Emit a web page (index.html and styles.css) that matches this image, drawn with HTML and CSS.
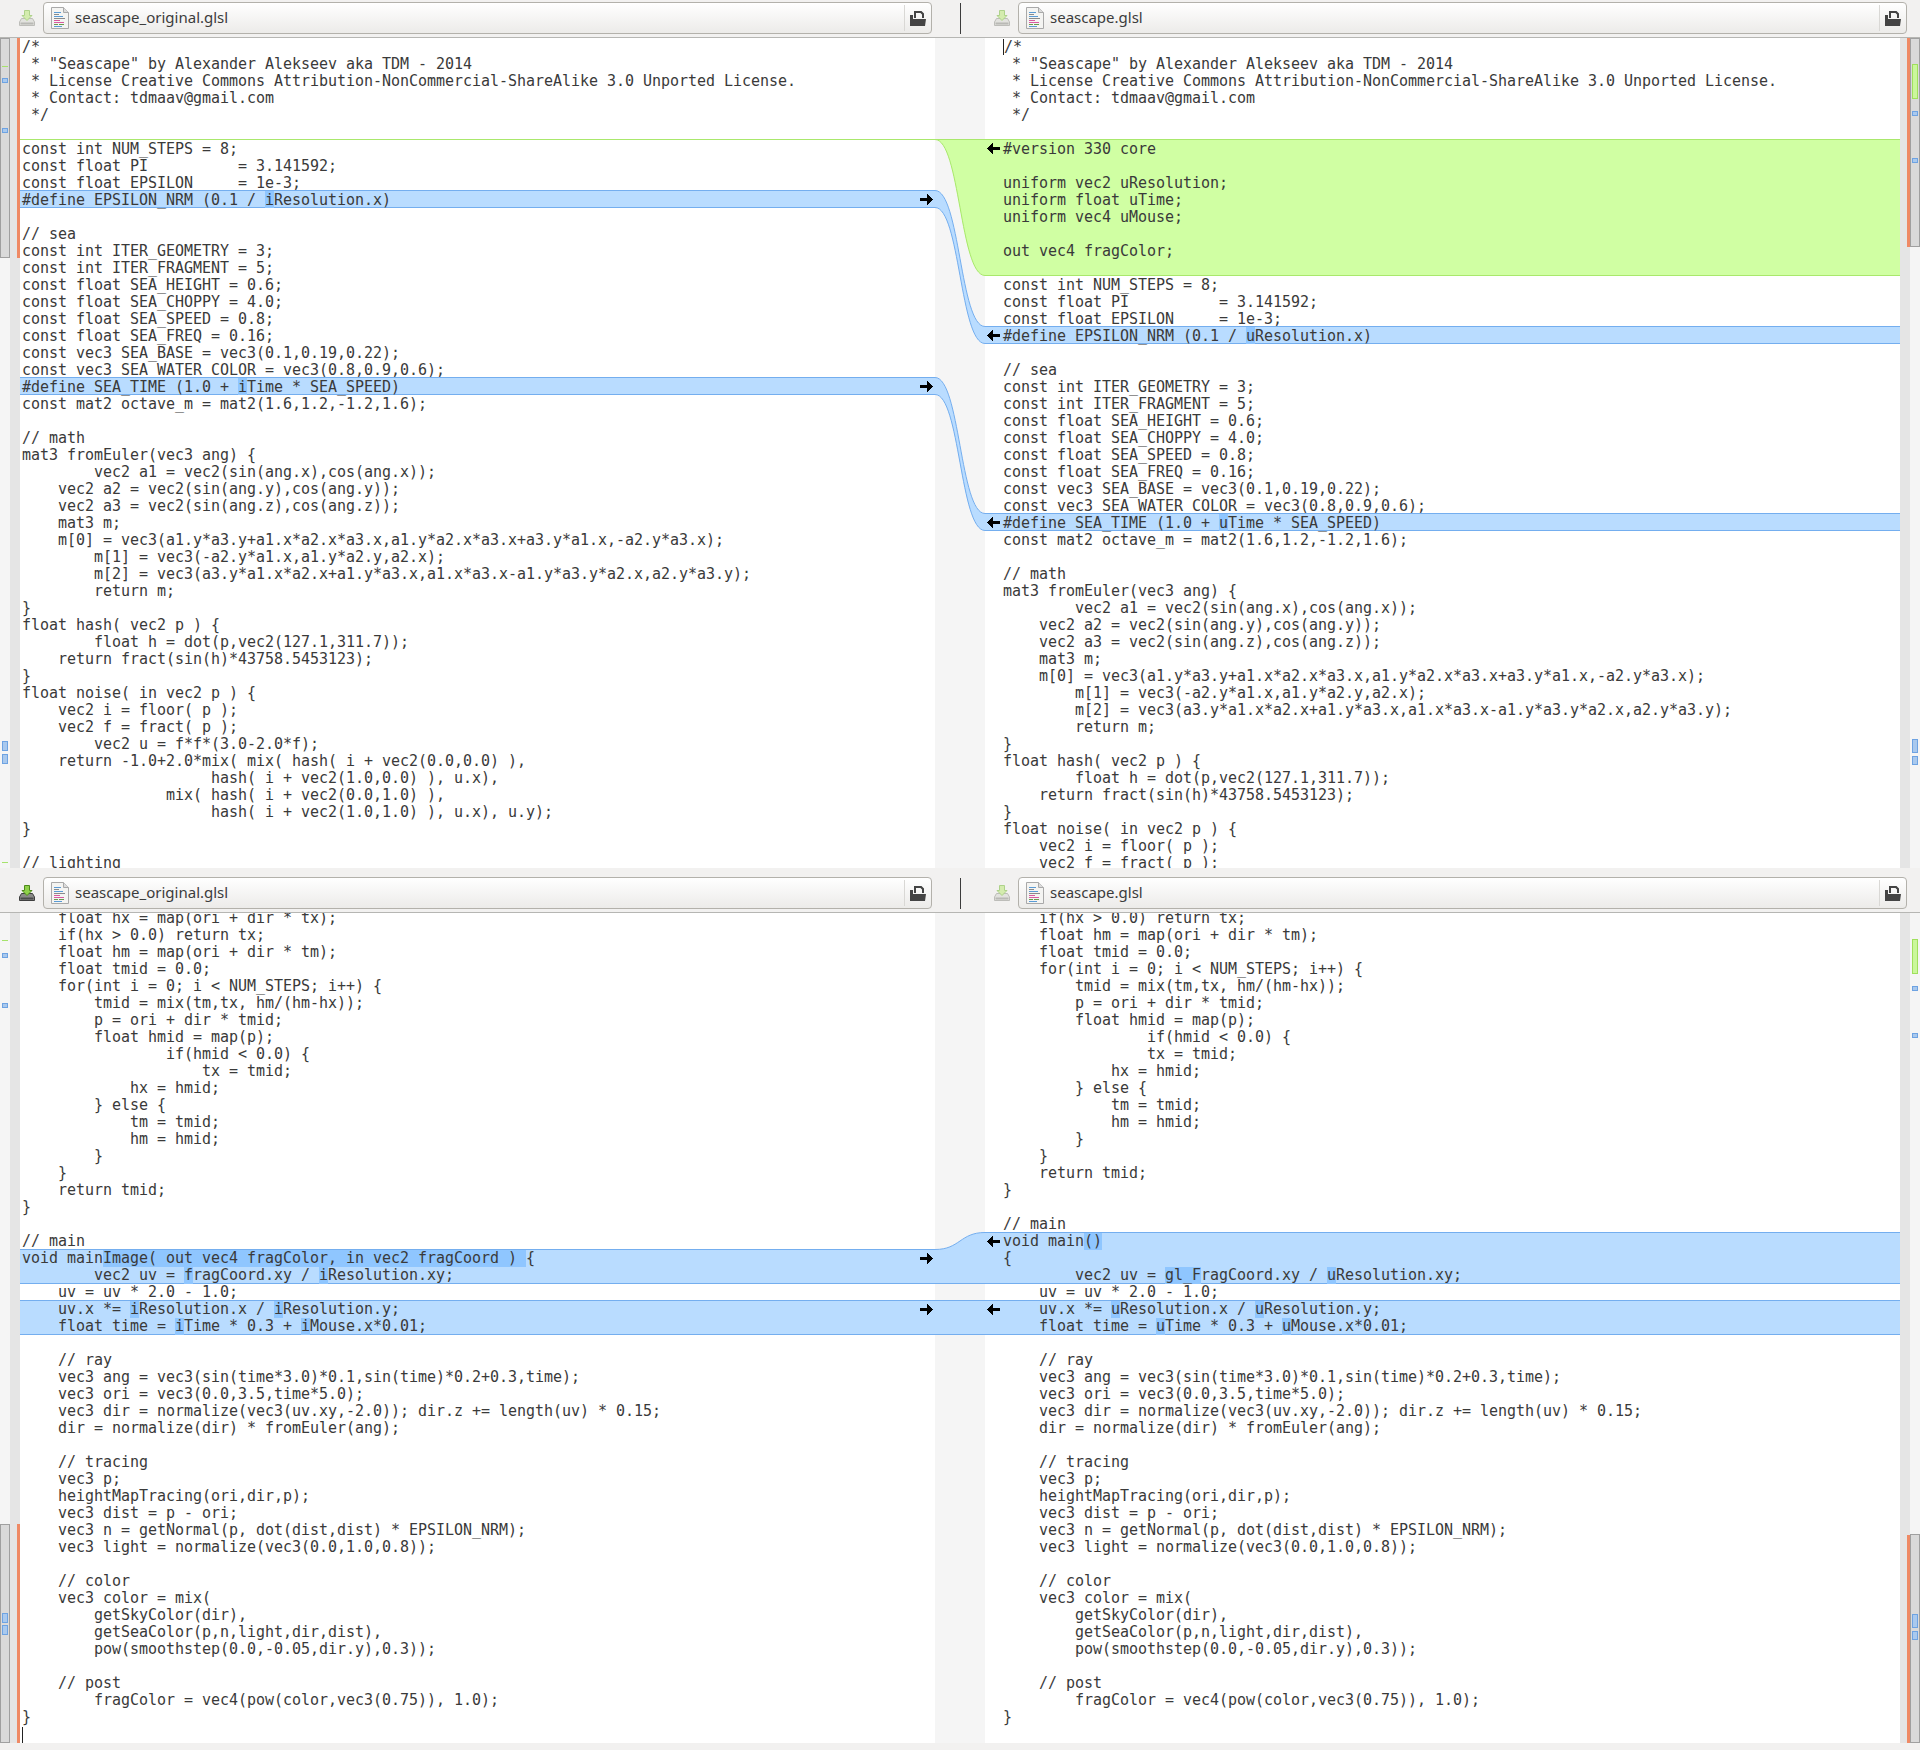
FILE: index.html
```
<!DOCTYPE html>
<html lang="en">
<head>
<meta charset="utf-8">
<title>Meld: seascape_original.glsl : seascape.glsl</title>
<link rel="stylesheet" href="styles.css">
</head>
<body>
<svg class="defs" width="0" height="0" aria-hidden="true">
  <defs>
    <symbol id="save-on" viewBox="0 0 16 16">
      <path d="M2.500 8.500 .5 12v3.500h15V12l-2-3.500z" fill="#8a8a88" stroke="#3f3f3f"/>
      <path d="M1.500 12.500h13v2h-13z" fill="#4b4b4a"/>
      <path d="M5.500 .5h5v5h2.500L8 10.500 3 5.500h2.500z" fill="#8fd04a" stroke="#4e8a1a"/>
    </symbol>
    <symbol id="save-off" viewBox="0 0 16 16">
      <path d="M2.500 8.500 .5 12v3.500h15V12l-2-3.500z" fill="#e2e2de" stroke="#bdbdb9"/>
      <path d="M1.500 12.500h13v2h-13z" fill="#b9b9b5"/>
      <path d="M5.500 .5h5v5h2.500L8 10.500 3 5.500h2.500z" fill="#d4ecae" stroke="#aed28a"/>
    </symbol>
    <symbol id="file" viewBox="0 0 18 22">
      <path d="M.5 .5h12l5 5v16H.5z" fill="#f4f4f2" stroke="#a9a9a9"/>
      <path d="M12.500 .5v5h5" fill="#dcdcdc" stroke="#a9a9a9"/>
      <path d="M3 5h7v1H3z" fill="#5a9bd5"/>
      <path d="M3 7h5v1H3z" fill="#8a8a8a"/>
      <path d="M3 9h9v1H3z" fill="#5a9bd5"/>
      <path d="M3 11h11v1H3z" fill="#8a8a8a"/>
      <path d="M3 13h6v1H3z" fill="#d85ba0"/>
      <path d="M3 15h10v1H3z" fill="#d85ba0"/>
      <path d="M3 17h4v1H3zM8 17h5v1H8z" fill="#6a9a50"/>
      <path d="M3 19h8v1H3z" fill="#5a9bd5"/>
    </symbol>
    <symbol id="open" viewBox="0 0 16 15">
      <path fill="#444" fill-rule="evenodd" d="M4 0H11.500L14 2.500V7H4ZM6 2V7H12V3.500L10.500 2ZM0 15V4H3V8H16L15 15Z"/>
    </symbol>
    <symbol id="arr-r" viewBox="0 0 13 11">
      <path d="M0 4h7V0h1v1h1v1h1v1h1v1h1v1h1v1h-1v1h-1v1h-1v1H9v1H8v1H7V7H0z" fill="#000"/>
    </symbol>
    <symbol id="arr-l" viewBox="0 0 13 11">
      <path d="M13 4H6V0H5v1H4v1H3v1H2v1H1v1H0v1h1v1h1v1h1v1h1v1h1v1h1V7h7z" fill="#000"/>
    </symbol>
  </defs>
</svg>

<main class="window">

<section class="pane">
  <header class="bar">
    <div class="side side-l">
      <svg class="save"><use href="#save-off"/></svg>
      <div class="entry"><svg class="fileicon"><use href="#file"/></svg><span class="name">seascape_original.glsl</span><span class="openbtn"><svg class="openicon"><use href="#open"/></svg></span></div>
    </div>
    <div class="sep"></div>
    <div class="side side-r">
      <svg class="save"><use href="#save-off"/></svg>
      <div class="entry"><svg class="fileicon"><use href="#file"/></svg><span class="name">seascape.glsl</span><span class="openbtn"><svg class="openicon"><use href="#open"/></svg></span></div>
    </div>
  </header>
  <div class="body">
    <svg class="map" viewBox="0 0 10 830">
      <rect class="thumb" x=".5" y=".5" width="9" height="219"/>
      <rect class="mk-g" x="2" y="28" width="6" height="1"/>
      <rect class="mk-b" x="2.500" y="40.500" width="5" height="4"/>
      <rect class="mk-b" x="2.500" y="90.500" width="5" height="4"/>
      <rect class="mk-b" x="2.500" y="703.500" width="5" height="9"/>
      <rect class="mk-b" x="2.500" y="716.500" width="5" height="9"/>
      <rect class="mk-g" x="2" y="824" width="6" height="1"/>
    </svg>
    <div class="gutter gutter-l"><div class="orange orange-a"></div></div>
    <div class="editor"><div class="code">
<div class="ln">/*</div>
<div class="ln"> * "Seascape" by Alexander Alekseev aka TDM - 2014</div>
<div class="ln"> * License Creative Commons Attribution-NonCommercial-ShareAlike 3.0 Unported License.</div>
<div class="ln"> * Contact: tdmaav@gmail.com</div>
<div class="ln"> */</div>
<div class="ln ins-line"></div>
<div class="ln">const int NUM_STEPS = 8;</div>
<div class="ln">const float PI          = 3.141592;</div>
<div class="ln">const float EPSILON     = 1e-3;</div>
<div class="ln chg top bot">#define EPSILON_NRM (0.1 / <span class="i">i</span>Resolution.x)<svg class="arrow arrow-r"><use href="#arr-r"/></svg></div>
<div class="ln"></div>
<div class="ln">// sea</div>
<div class="ln">const int ITER_GEOMETRY = 3;</div>
<div class="ln">const int ITER_FRAGMENT = 5;</div>
<div class="ln">const float SEA_HEIGHT = 0.6;</div>
<div class="ln">const float SEA_CHOPPY = 4.0;</div>
<div class="ln">const float SEA_SPEED = 0.8;</div>
<div class="ln">const float SEA_FREQ = 0.16;</div>
<div class="ln">const vec3 SEA_BASE = vec3(0.1,0.19,0.22);</div>
<div class="ln">const vec3 SEA_WATER_COLOR = vec3(0.8,0.9,0.6);</div>
<div class="ln chg top bot">#define SEA_TIME (1.0 + <span class="i">i</span>Time * SEA_SPEED)<svg class="arrow arrow-r"><use href="#arr-r"/></svg></div>
<div class="ln">const mat2 octave_m = mat2(1.6,1.2,-1.2,1.6);</div>
<div class="ln"></div>
<div class="ln">// math</div>
<div class="ln">mat3 fromEuler(vec3 ang) {</div>
<div class="ln">        vec2 a1 = vec2(sin(ang.x),cos(ang.x));</div>
<div class="ln">    vec2 a2 = vec2(sin(ang.y),cos(ang.y));</div>
<div class="ln">    vec2 a3 = vec2(sin(ang.z),cos(ang.z));</div>
<div class="ln">    mat3 m;</div>
<div class="ln">    m[0] = vec3(a1.y*a3.y+a1.x*a2.x*a3.x,a1.y*a2.x*a3.x+a3.y*a1.x,-a2.y*a3.x);</div>
<div class="ln">        m[1] = vec3(-a2.y*a1.x,a1.y*a2.y,a2.x);</div>
<div class="ln">        m[2] = vec3(a3.y*a1.x*a2.x+a1.y*a3.x,a1.x*a3.x-a1.y*a3.y*a2.x,a2.y*a3.y);</div>
<div class="ln">        return m;</div>
<div class="ln">}</div>
<div class="ln">float hash( vec2 p ) {</div>
<div class="ln">        float h = dot(p,vec2(127.1,311.7));</div>
<div class="ln">    return fract(sin(h)*43758.5453123);</div>
<div class="ln">}</div>
<div class="ln">float noise( in vec2 p ) {</div>
<div class="ln">    vec2 i = floor( p );</div>
<div class="ln">    vec2 f = fract( p );</div>
<div class="ln">        vec2 u = f*f*(3.0-2.0*f);</div>
<div class="ln">    return -1.0+2.0*mix( mix( hash( i + vec2(0.0,0.0) ),</div>
<div class="ln">                     hash( i + vec2(1.0,0.0) ), u.x),</div>
<div class="ln">                mix( hash( i + vec2(0.0,1.0) ),</div>
<div class="ln">                     hash( i + vec2(1.0,1.0) ), u.x), u.y);</div>
<div class="ln">}</div>
<div class="ln"></div>
<div class="ln">// lighting</div>
    </div></div>
    <svg class="link" viewBox="0 0 50 830">
      <path class="f-ins" d="M0 101.500H50V237.500C25 237.500 25 101.500 0 101.500Z"/>
      <path class="s-ins" d="M0 101.500H50M50 237.500C25 237.500 25 101.500 0 101.500"/>
      <path class="f-chg" d="M0 152.500C25 152.500 25 288.500 50 288.500V305.500C25 305.500 25 169.500 0 169.500Z"/>
      <path class="s-chg" d="M0 152.500C25 152.500 25 288.500 50 288.500M50 305.500C25 305.500 25 169.500 0 169.500"/>
      <path class="f-chg" d="M0 339.500C25 339.500 25 475.500 50 475.500V492.500C25 492.500 25 356.500 0 356.500Z"/>
      <path class="s-chg" d="M0 339.500C25 339.500 25 475.500 50 475.500M50 492.500C25 492.500 25 356.500 0 356.500"/>
    </svg>
    <div class="editor editor-right"><div class="code">
<div class="ln"><span class="caret"></span>/*</div>
<div class="ln"> * "Seascape" by Alexander Alekseev aka TDM - 2014</div>
<div class="ln"> * License Creative Commons Attribution-NonCommercial-ShareAlike 3.0 Unported License.</div>
<div class="ln"> * Contact: tdmaav@gmail.com</div>
<div class="ln"> */</div>
<div class="ln"></div>
<div class="ln ins top">#version 330 core<svg class="arrow arrow-l"><use href="#arr-l"/></svg></div>
<div class="ln ins"></div>
<div class="ln ins">uniform vec2 uResolution;</div>
<div class="ln ins">uniform float uTime;</div>
<div class="ln ins">uniform vec4 uMouse;</div>
<div class="ln ins"></div>
<div class="ln ins">out vec4 fragColor;</div>
<div class="ln ins bot"></div>
<div class="ln">const int NUM_STEPS = 8;</div>
<div class="ln">const float PI          = 3.141592;</div>
<div class="ln">const float EPSILON     = 1e-3;</div>
<div class="ln chg top bot">#define EPSILON_NRM (0.1 / <span class="i">u</span>Resolution.x)<svg class="arrow arrow-l"><use href="#arr-l"/></svg></div>
<div class="ln"></div>
<div class="ln">// sea</div>
<div class="ln">const int ITER_GEOMETRY = 3;</div>
<div class="ln">const int ITER_FRAGMENT = 5;</div>
<div class="ln">const float SEA_HEIGHT = 0.6;</div>
<div class="ln">const float SEA_CHOPPY = 4.0;</div>
<div class="ln">const float SEA_SPEED = 0.8;</div>
<div class="ln">const float SEA_FREQ = 0.16;</div>
<div class="ln">const vec3 SEA_BASE = vec3(0.1,0.19,0.22);</div>
<div class="ln">const vec3 SEA_WATER_COLOR = vec3(0.8,0.9,0.6);</div>
<div class="ln chg top bot">#define SEA_TIME (1.0 + <span class="i">u</span>Time * SEA_SPEED)<svg class="arrow arrow-l"><use href="#arr-l"/></svg></div>
<div class="ln">const mat2 octave_m = mat2(1.6,1.2,-1.2,1.6);</div>
<div class="ln"></div>
<div class="ln">// math</div>
<div class="ln">mat3 fromEuler(vec3 ang) {</div>
<div class="ln">        vec2 a1 = vec2(sin(ang.x),cos(ang.x));</div>
<div class="ln">    vec2 a2 = vec2(sin(ang.y),cos(ang.y));</div>
<div class="ln">    vec2 a3 = vec2(sin(ang.z),cos(ang.z));</div>
<div class="ln">    mat3 m;</div>
<div class="ln">    m[0] = vec3(a1.y*a3.y+a1.x*a2.x*a3.x,a1.y*a2.x*a3.x+a3.y*a1.x,-a2.y*a3.x);</div>
<div class="ln">        m[1] = vec3(-a2.y*a1.x,a1.y*a2.y,a2.x);</div>
<div class="ln">        m[2] = vec3(a3.y*a1.x*a2.x+a1.y*a3.x,a1.x*a3.x-a1.y*a3.y*a2.x,a2.y*a3.y);</div>
<div class="ln">        return m;</div>
<div class="ln">}</div>
<div class="ln">float hash( vec2 p ) {</div>
<div class="ln">        float h = dot(p,vec2(127.1,311.7));</div>
<div class="ln">    return fract(sin(h)*43758.5453123);</div>
<div class="ln">}</div>
<div class="ln">float noise( in vec2 p ) {</div>
<div class="ln">    vec2 i = floor( p );</div>
<div class="ln">    vec2 f = fract( p );</div>
    </div></div>
    <div class="gutter gutter-r"><div class="orange orange-b"></div></div>
    <svg class="map map-r" viewBox="0 0 10 830">
      <rect class="thumb" x=".5" y=".5" width="9" height="208"/>
      <rect class="mk-gb" x="2.500" y="26.500" width="5" height="34"/>
      <rect class="mk-b" x="2.500" y="73.500" width="5" height="4"/>
      <rect class="mk-b" x="2.500" y="120.500" width="5" height="4"/>
      <rect class="mk-b" x="2.500" y="701.500" width="5" height="13"/>
      <rect class="mk-b" x="2.500" y="718.500" width="5" height="8"/>
    </svg>
  </div>
</section>

<section class="pane">
  <header class="bar">
    <div class="side side-l">
      <svg class="save"><use href="#save-on"/></svg>
      <div class="entry"><svg class="fileicon"><use href="#file"/></svg><span class="name">seascape_original.glsl</span><span class="openbtn"><svg class="openicon"><use href="#open"/></svg></span></div>
    </div>
    <div class="sep"></div>
    <div class="side side-r">
      <svg class="save"><use href="#save-off"/></svg>
      <div class="entry"><svg class="fileicon"><use href="#file"/></svg><span class="name">seascape.glsl</span><span class="openbtn"><svg class="openicon"><use href="#open"/></svg></span></div>
    </div>
  </header>
  <div class="body">
    <svg class="map" viewBox="0 0 10 830">
      <rect class="thumb" x=".5" y="611.500" width="9" height="218"/>
      <rect class="mk-g" x="2" y="27" width="6" height="1"/>
      <rect class="mk-b" x="2.500" y="40.500" width="5" height="4"/>
      <rect class="mk-b" x="2.500" y="90.500" width="5" height="4"/>
      <rect class="mk-b" x="2.500" y="700.500" width="5" height="9"/>
      <rect class="mk-b" x="2.500" y="712.500" width="5" height="9"/>
    </svg>
    <div class="gutter gutter-l gutter-end"><div class="orange orange-c"></div></div>
    <div class="editor"><div class="code scrolled">
<div class="ln">    float hx = map(ori + dir * tx);</div>
<div class="ln">    if(hx &gt; 0.0) return tx;</div>
<div class="ln">    float hm = map(ori + dir * tm);</div>
<div class="ln">    float tmid = 0.0;</div>
<div class="ln">    for(int i = 0; i &lt; NUM_STEPS; i++) {</div>
<div class="ln">        tmid = mix(tm,tx, hm/(hm-hx));</div>
<div class="ln">        p = ori + dir * tmid;</div>
<div class="ln">        float hmid = map(p);</div>
<div class="ln">                if(hmid &lt; 0.0) {</div>
<div class="ln">                    tx = tmid;</div>
<div class="ln">            hx = hmid;</div>
<div class="ln">        } else {</div>
<div class="ln">            tm = tmid;</div>
<div class="ln">            hm = hmid;</div>
<div class="ln">        }</div>
<div class="ln">    }</div>
<div class="ln">    return tmid;</div>
<div class="ln">}</div>
<div class="ln"></div>
<div class="ln">// main</div>
<div class="ln chg top">void main<span class="i">Image( out vec4 fragColor, in vec2 fragCoord ) </span>{<svg class="arrow arrow-r"><use href="#arr-r"/></svg></div>
<div class="ln chg bot">        vec2 uv = <span class="i">f</span>ragCoord.xy / <span class="i">i</span>Resolution.xy;</div>
<div class="ln">    uv = uv * 2.0 - 1.0;</div>
<div class="ln chg top">    uv.x *= <span class="i">i</span>Resolution.x / <span class="i">i</span>Resolution.y;<svg class="arrow arrow-r"><use href="#arr-r"/></svg></div>
<div class="ln chg bot">    float time = <span class="i">i</span>Time * 0.3 + <span class="i">i</span>Mouse.x*0.01;</div>
<div class="ln"></div>
<div class="ln">    // ray</div>
<div class="ln">    vec3 ang = vec3(sin(time*3.0)*0.1,sin(time)*0.2+0.3,time);</div>
<div class="ln">    vec3 ori = vec3(0.0,3.5,time*5.0);</div>
<div class="ln">    vec3 dir = normalize(vec3(uv.xy,-2.0)); dir.z += length(uv) * 0.15;</div>
<div class="ln">    dir = normalize(dir) * fromEuler(ang);</div>
<div class="ln"></div>
<div class="ln">    // tracing</div>
<div class="ln">    vec3 p;</div>
<div class="ln">    heightMapTracing(ori,dir,p);</div>
<div class="ln">    vec3 dist = p - ori;</div>
<div class="ln">    vec3 n = getNormal(p, dot(dist,dist) * EPSILON_NRM);</div>
<div class="ln">    vec3 light = normalize(vec3(0.0,1.0,0.8));</div>
<div class="ln"></div>
<div class="ln">    // color</div>
<div class="ln">    vec3 color = mix(</div>
<div class="ln">        getSkyColor(dir),</div>
<div class="ln">        getSeaColor(p,n,light,dir,dist),</div>
<div class="ln">        pow(smoothstep(0.0,-0.05,dir.y),0.3));</div>
<div class="ln"></div>
<div class="ln">    // post</div>
<div class="ln">        fragColor = vec4(pow(color,vec3(0.75)), 1.0);</div>
<div class="ln">}</div>
<div class="ln"><span class="caret"></span></div>
    </div></div>
    <svg class="link" viewBox="0 0 50 830">
      <path class="f-chg" d="M0 336.500C25 336.500 25 319.500 50 319.500V370.500H0Z"/>
      <path class="s-chg" d="M0 336.500C25 336.500 25 319.500 50 319.500M0 370.500H50"/>
      <path class="f-chg" d="M0 387.500H50V421.500H0Z"/>
      <path class="s-chg" d="M0 387.500H50M0 421.500H50"/>
    </svg>
    <div class="editor editor-right"><div class="code scrolled">
<div class="ln">    if(hx &gt; 0.0) return tx;</div>
<div class="ln">    float hm = map(ori + dir * tm);</div>
<div class="ln">    float tmid = 0.0;</div>
<div class="ln">    for(int i = 0; i &lt; NUM_STEPS; i++) {</div>
<div class="ln">        tmid = mix(tm,tx, hm/(hm-hx));</div>
<div class="ln">        p = ori + dir * tmid;</div>
<div class="ln">        float hmid = map(p);</div>
<div class="ln">                if(hmid &lt; 0.0) {</div>
<div class="ln">                tx = tmid;</div>
<div class="ln">            hx = hmid;</div>
<div class="ln">        } else {</div>
<div class="ln">            tm = tmid;</div>
<div class="ln">            hm = hmid;</div>
<div class="ln">        }</div>
<div class="ln">    }</div>
<div class="ln">    return tmid;</div>
<div class="ln">}</div>
<div class="ln"></div>
<div class="ln">// main</div>
<div class="ln chg top">void main<span class="i">()</span><svg class="arrow arrow-l"><use href="#arr-l"/></svg></div>
<div class="ln chg">{</div>
<div class="ln chg bot">        vec2 uv = <span class="i">gl_F</span>ragCoord.xy / <span class="i">u</span>Resolution.xy;</div>
<div class="ln">    uv = uv * 2.0 - 1.0;</div>
<div class="ln chg top">    uv.x *= <span class="i">u</span>Resolution.x / <span class="i">u</span>Resolution.y;<svg class="arrow arrow-l"><use href="#arr-l"/></svg></div>
<div class="ln chg bot">    float time = <span class="i">u</span>Time * 0.3 + <span class="i">u</span>Mouse.x*0.01;</div>
<div class="ln"></div>
<div class="ln">    // ray</div>
<div class="ln">    vec3 ang = vec3(sin(time*3.0)*0.1,sin(time)*0.2+0.3,time);</div>
<div class="ln">    vec3 ori = vec3(0.0,3.5,time*5.0);</div>
<div class="ln">    vec3 dir = normalize(vec3(uv.xy,-2.0)); dir.z += length(uv) * 0.15;</div>
<div class="ln">    dir = normalize(dir) * fromEuler(ang);</div>
<div class="ln"></div>
<div class="ln">    // tracing</div>
<div class="ln">    vec3 p;</div>
<div class="ln">    heightMapTracing(ori,dir,p);</div>
<div class="ln">    vec3 dist = p - ori;</div>
<div class="ln">    vec3 n = getNormal(p, dot(dist,dist) * EPSILON_NRM);</div>
<div class="ln">    vec3 light = normalize(vec3(0.0,1.0,0.8));</div>
<div class="ln"></div>
<div class="ln">    // color</div>
<div class="ln">    vec3 color = mix(</div>
<div class="ln">        getSkyColor(dir),</div>
<div class="ln">        getSeaColor(p,n,light,dir,dist),</div>
<div class="ln">        pow(smoothstep(0.0,-0.05,dir.y),0.3));</div>
<div class="ln"></div>
<div class="ln">    // post</div>
<div class="ln">        fragColor = vec4(pow(color,vec3(0.75)), 1.0);</div>
<div class="ln">}</div>
    </div></div>
    <div class="gutter gutter-r gutter-end"><div class="orange orange-d"></div></div>
    <svg class="map map-r" viewBox="0 0 10 830">
      <rect class="thumb" x=".5" y="621.500" width="9" height="208"/>
      <rect class="mk-gb" x="2.500" y="26.500" width="5" height="34"/>
      <rect class="mk-b" x="2.500" y="73.500" width="5" height="4"/>
      <rect class="mk-b" x="2.500" y="120.500" width="5" height="4"/>
      <rect class="mk-b" x="2.500" y="701.500" width="5" height="13"/>
      <rect class="mk-b" x="2.500" y="718.500" width="5" height="8"/>
    </svg>
  </div>
</section>

</main>
</body>
</html>
```
FILE: styles.css
```
* { box-sizing: border-box; }
html, body { margin: 0; padding: 0; }
body { width: 1920px; height: 1750px; background: #f2f1f0; overflow: hidden; }
.defs { position: absolute; }
.window { display: flex; flex-direction: column; gap: 7px; }
.pane { display: flex; flex-direction: column; height: 868px; }

.bar {
  display: flex;
  height: 38px;
  background: #f2f1f0;
  border-bottom: 1px solid #b6b6b3;
}
.side { display: flex; align-items: flex-start; gap: 8px; padding-top: 2px; }
.side-l { width: 960px; padding-left: 19px; }
.side-r { width: 959px; padding-left: 33px; }
.sep { width: 1px; height: 31px; margin-top: 3px; background: #3c3c3c; }
.save { width: 16px; height: 16px; margin-top: 8px; flex: none; }
.entry {
  display: flex;
  align-items: center;
  width: 889px;
  height: 32px;
  border: 1px solid #b3b1ab;
  border-radius: 4px;
  background: linear-gradient(#ffffff, #ecebe9);
  padding-left: 7px;
}
.fileicon { width: 18px; height: 22px; flex: none; }
.name {
  margin-left: 6px;
  padding-bottom: 2px;
  font: 15px/20px "Noto Sans", sans-serif;
  color: #3c3c3c;
  flex: 1;
  white-space: nowrap;
}
.openbtn {
  display: flex;
  align-items: center;
  justify-content: center;
  width: 27px;
  height: 26px;
  border-left: 1px solid #d9d8d5;
  flex: none;
  padding-right: 1px;
}
.openicon { width: 16px; height: 15px; }

.body { display: flex; height: 830px; }
.map { width: 10px; height: 830px; flex: none; background: #f5f5f5; }
.thumb { fill: #dadada; stroke: #a0a0a0; }
.mk-g { fill: #a6e36c; }
.mk-b { fill: #a9c9ee; stroke: #6ea3e2; }
.mk-gb { fill: #caf79c; stroke: #9fe05c; }

.gutter { width: 10px; flex: none; background: #e5e5e5; display: flex; flex-direction: column; }
.gutter-end { justify-content: flex-end; }
.gutter-l { align-items: flex-end; }
.gutter-r { align-items: flex-end; }
.orange { width: 3px; background: #ef8a65; }
.orange-a { height: 220px; }
.orange-b { height: 209px; }
.orange-c { height: 219px; }
.orange-d { height: 208px; }

.editor {
  width: 915px;
  flex: none;
  height: 830px;
  overflow: hidden;
  background: #fff;
}
.code {
  font: 15px/17px "DejaVu Sans Mono", monospace;
  letter-spacing: -0.03px;
  color: #3a3a3a;
}
.scrolled { margin-top: -3px; }
.ln {
  position: relative;
  height: 17px;
  line-height: 19px;
  white-space: pre;
  padding-left: 2px;
}
.scrolled .ln { line-height: 17px; }
.editor-right .ln { padding-left: 18px; }

.chg { background: #b9dcff; }
.ins { background: #d0ffa3; }
.chg.top { box-shadow: 0 -1px 0 #74aeef; }
.chg.bot { box-shadow: inset 0 -1px 0 #74aeef; }
.chg.top.bot { box-shadow: 0 -1px 0 #74aeef, inset 0 -1px 0 #74aeef; }
.ins.top { box-shadow: 0 -1px 0 #a9e86c; }
.ins.bot { box-shadow: inset 0 -1px 0 #a9e86c; }
.ins-line { box-shadow: inset 0 -1px 0 #a9e86c; }
.i { display: inline-block; height: 17px; vertical-align: top; background: #8fc6ff; }
.caret { display: inline-block; width: 0; height: 16px; vertical-align: top; margin-top: 1px; border-left: 1px solid #222; }

.arrow { position: absolute; top: 3px; width: 13px; height: 11px; }
.arrow-r { right: 2px; }
.arrow-l { left: 2px; }

.link { width: 50px; height: 830px; flex: none; background: #f5f5f5; }
.f-ins { fill: #d0ffa3; stroke: none; }
.s-ins { fill: none; stroke: #a9e86c; stroke-width: 1; }
.f-chg { fill: #b9dcff; stroke: none; }
.s-chg { fill: none; stroke: #74aeef; stroke-width: 1; }
```
